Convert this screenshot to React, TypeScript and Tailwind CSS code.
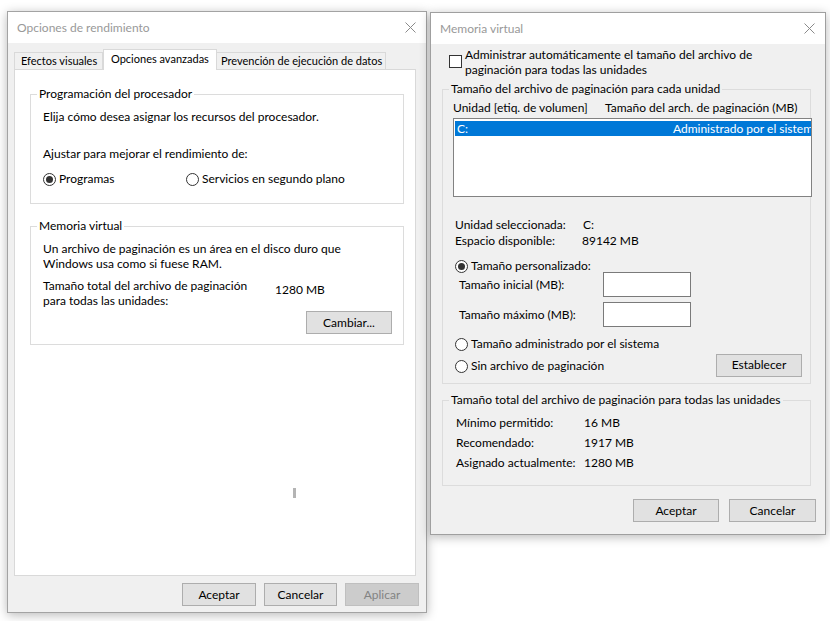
import React from 'react';

function CloseX() {
  return (
    <svg width="11" height="11" viewBox="0 0 11 11" className="block">
      <path d="M0.5 0.5 L10.5 10.5 M10.5 0.5 L0.5 10.5" stroke="#8a8a8a" strokeWidth="1" fill="none" />
    </svg>
  );
}

function Radio({ checked }: { checked?: boolean }) {
  return (
    <span className="w-[13px] h-[13px] shrink-0 rounded-full border border-[#333333] bg-white flex items-center justify-center">
      {checked && <span className="w-[7px] h-[7px] rounded-full bg-[#333333]" />}
    </span>
  );
}

function Btn({ label, w, disabled }: { label: string; w: string; disabled?: boolean }) {
  return (
    <div
      className={
        disabled
          ? `${w} h-[23px] shrink-0 flex items-center justify-center border border-[#bfbfbf] bg-[#cccccc] text-[#838383]`
          : `${w} h-[23px] shrink-0 flex items-center justify-center border border-[#adadad] bg-[#e1e1e1] text-black`
      }
    >
      {label}
    </div>
  );
}

function TitleBar({ title }: { title: string }) {
  return (
    <div className="h-[31px] shrink-0 bg-white flex items-center justify-between pl-[9px] pr-[10px] text-[#999999] text-[12px]">
      <span>{title}</span>
      <CloseX />
    </div>
  );
}

export default function App() {
  return (
    <div className="relative w-[830px] h-[621px] bg-white overflow-hidden font-['Lato',sans-serif] text-[12px] leading-[16px] text-black whitespace-nowrap">
      {/* Opciones de rendimiento */}
      <div className="absolute left-[7px] top-[11px] w-[420px] h-[602px] border border-[#a3a3a3] bg-[#f0f0f0] shadow-[0_2px_10px_rgba(0,0,0,0.28)] flex flex-col">
        <TitleBar title="Opciones de rendimiento" />
        <div className="flex flex-col pl-[6px] pt-[6px]">
          <div className="flex items-end h-[20px] relative z-10 text-[11px]">
            <div className="w-[89px] h-[17px] border border-b-0 border-[#d9d9d9] bg-[#f0f0f0] pl-[6px] leading-[16px]">Efectos visuales</div>
            <div className="w-[114px] h-[21px] -mb-px border border-b-0 border-[#d9d9d9] bg-white pl-[7px] leading-[17px]">Opciones avanzadas</div>
            <div className="w-[169px] h-[17px] border border-b-0 border-l-0 border-[#d9d9d9] bg-[#f0f0f0] pl-[4px] leading-[16px]">Prevención de ejecución de datos</div>
          </div>
          <div className="relative w-[402px] h-[507px] bg-white border border-[#d9d9d9] pl-[15px] pt-[16px]">
            <fieldset className="min-w-0 w-[374px] border border-[#dcdcdc] px-[12px] pb-[16px]">
              <legend className="ml-[-6px] px-[2px]">Programación del procesador</legend>
              <div className="mt-[7px]">Elija cómo desea asignar los recursos del procesador.</div>
              <div className="mt-[21px]">Ajustar para mejorar el rendimiento de:</div>
              <div className="mt-[9px] flex items-center">
                <div className="w-[143px] flex items-center gap-[3px]">
                  <Radio checked />
                  <span>Programas</span>
                </div>
                <div className="flex items-center gap-[3px]">
                  <Radio />
                  <span>Servicios en segundo plano</span>
                </div>
              </div>
            </fieldset>

            <fieldset className="min-w-0 mt-[14px] w-[374px] border border-[#dcdcdc] pl-[12px] pr-[11px] pb-[10px]">
              <legend className="ml-[-6px] px-[2px]">Memoria virtual</legend>
              <div className="mt-[7px] leading-[15px]">
                Un archivo de paginación es un área en el disco duro que
                <br />
                Windows usa como si fuese RAM.
              </div>
              <div className="mt-[7px] flex items-start leading-[15px]">
                <div className="w-[232px]">
                  Tamaño total del archivo de paginación
                  <br />
                  para todas las unidades:
                </div>
                <div className="mt-[4px]">1280 MB</div>
              </div>
              <div className="mt-[3px] flex justify-end">
                <Btn label="Cambiar..." w="w-[86px]" />
              </div>
            </fieldset>

            <div className="absolute left-[278px] top-[418px] w-[3px] h-[10px] bg-[#b4b4b4]" />
          </div>
          <div className="mt-[7px] flex justify-end gap-[8px] pr-[7px]">
            <Btn label="Aceptar" w="w-[74px]" />
            <Btn label="Cancelar" w="w-[73px]" />
            <Btn label="Aplicar" w="w-[74px]" disabled />
          </div>
        </div>
      </div>

      {/* Memoria virtual */}
      <div className="absolute left-[430px] top-[12px] w-[396px] h-[523px] border border-[#9f9f9f] bg-[#f0f0f0] shadow-[0_2px_10px_rgba(0,0,0,0.28)] flex flex-col">
        <TitleBar title="Memoria virtual" />
        <div className="flex flex-col pl-[11px] pt-[3px]">
          <div className="flex items-start pl-[7px]">
            <span className="mt-[8px] w-[13px] h-[13px] shrink-0 border border-[#333333] bg-white" />
            <div className="ml-[3px] leading-[15px]">
              Administrar automáticamente el tamaño del archivo de
              <br />
              paginación para todas las unidades
            </div>
          </div>

          <fieldset className="min-w-0 mt-[4px] w-[369px] border border-[#dcdcdc] pl-[10px] pb-[6px] pr-[8px]">
            <legend className="ml-[-4px] px-[2px]">Tamaño del archivo de paginación para cada unidad</legend>
            <div className="mt-[3px] flex">
              <span className="w-[152px]">Unidad [etiq. de volumen]</span>
              <span>Tamaño del arch. de paginación (MB)</span>
            </div>
            <div className="mt-[2px] w-[359px] h-[79px] border border-[#828282] bg-white pt-[2px] pl-px overflow-hidden">
              <div className="w-[366px] h-[15px] bg-[#0078d7] text-white flex items-center pl-[2px] pr-[2px]">
                <span>C:</span>
                <span className="ml-auto">Administrado por el sistema</span>
              </div>
            </div>

            <div className="mt-[20px] pl-[2px]">
              <div className="flex">
                <span className="w-[128px]">Unidad seleccionada:</span>
                <span>C:</span>
              </div>
              <div className="flex">
                <span className="w-[127px]">Espacio disponible:</span>
                <span>89142 MB</span>
              </div>
            </div>
            <div className="mt-[9px] pl-[2px] flex items-center gap-[3px]">
              <Radio checked />
              <span>Tamaño personalizado:</span>
            </div>
            <div className="-mt-[2px] flex items-center h-[25px] pl-[6px]">
              <span className="w-[144px]">Tamaño inicial (MB):</span>
              <div className="w-[88px] h-[25px] border border-[#7a7a7a] bg-white" />
            </div>
            <div className="mt-[5px] flex items-center h-[25px] pl-[6px]">
              <span className="w-[144px]">Tamaño máximo (MB):</span>
              <div className="w-[88px] h-[25px] border border-[#7a7a7a] bg-white" />
            </div>
            <div className="mt-[9px] pl-[2px] flex items-center gap-[3px]">
              <Radio />
              <span>Tamaño administrado por el sistema</span>
            </div>
            <div className="mt-px pl-[2px] flex items-center justify-between h-[24px]">
              <div className="flex items-center gap-[3px] mt-[2px]">
                <Radio />
                <span>Sin archivo de paginación</span>
              </div>
              <Btn label="Establecer" w="w-[86px]" />
            </div>
          </fieldset>

          <fieldset className="min-w-0 mt-[8px] w-[369px] border border-[#dcdcdc] pl-[13px] pb-[12px]">
            <legend className="ml-[-7px] px-[2px]">Tamaño total del archivo de paginación para todas las unidades</legend>
            <div className="mt-[5px] leading-[20px]">
              <div className="flex">
                <span className="w-[128px]">Mínimo permitido:</span>
                <span>16 MB</span>
              </div>
              <div className="flex">
                <span className="w-[128px]">Recomendado:</span>
                <span>1917 MB</span>
              </div>
              <div className="flex">
                <span className="w-[128px]">Asignado actualmente:</span>
                <span>1280 MB</span>
              </div>
            </div>
          </fieldset>

          <div className="mt-[13px] flex justify-end gap-[10px] pr-[9px]">
            <Btn label="Aceptar" w="w-[86px]" />
            <Btn label="Cancelar" w="w-[87px]" />
          </div>
        </div>
      </div>
    </div>
  );
}
